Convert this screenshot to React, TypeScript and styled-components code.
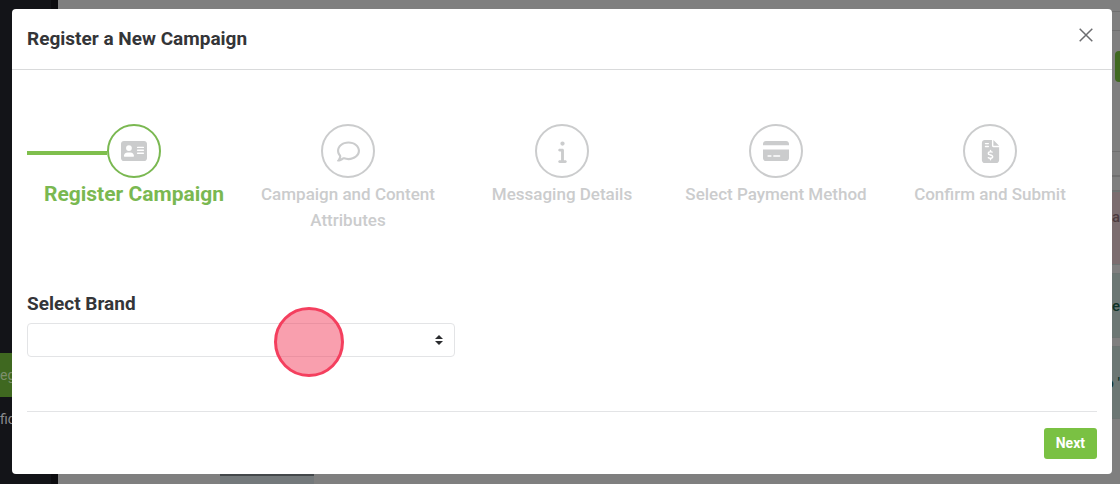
import React from "react";
import styled, { createGlobalStyle } from "styled-components";
import {
  FaAddressCard,
  FaRegComment,
  FaInfo,
  FaCreditCard,
  FaFileInvoiceDollar,
} from "react-icons/fa6";

const Global = createGlobalStyle`
  *, *::before, *::after { box-sizing: border-box; }
  body {
    margin: 0;
    font-family: Roboto, "Liberation Sans", sans-serif;
    color: #343538;
    background: #7f7f7f;
  }
  h1, p, ol { margin: 0; padding: 0; }
`;

const Screen = styled.div`
  position: relative;
  min-height: 100vh;
  overflow: hidden;
  padding: 9px 8px 10px 12px;
`;

const Backdrop = styled.div`
  position: absolute;
  inset: 0;
  display: flex;
  overflow: hidden;
  background: #7f7f7f;
`;

const Sidebar = styled.div`
  flex: none;
  width: 58px;
  padding-top: 353px;
  background: #131418;
  border-right: 7px solid #0c0c0f;
`;

const SideItem = styled.div<{ $active?: boolean }>`
  height: 44px;
  line-height: 44px;
  font-size: 14px;
  color: ${(p) => (p.$active ? "#7d8f6c" : "#8b8c8f")};
  background: ${(p) => (p.$active ? "#3f6820" : "transparent")};
`;

const Content = styled.div`
  flex: 1;
  display: flex;
  align-items: flex-end;
  justify-content: space-between;
  padding-left: 162px;
`;

const BottomTab = styled.div`
  width: 94px;
  height: 10px;
  border-top: 2px solid #44484b;
  background: #74797b;
`;

const SideCards = styled.div`
  align-self: stretch;
  width: 16px;
  display: flex;
  flex-direction: column;
  padding-top: 11px;

  > * {
    flex: none;
  }
`;

const Panel = styled.div<{ $height: number }>`
  height: ${(p) => p.$height}px;
  border: solid #6f6f6f;
  border-width: 1px 0;
`;

const GreenEdge = styled.div`
  height: 31px;
  margin: 20px 0 69px 11px;
  border-radius: 4px 0 0 4px;
  background: #3f6820;
`;

const Card = styled.div<{ $bg: string; $ink: string; $height: number; $top?: boolean }>`
  height: ${(p) => p.$height}px;
  margin-bottom: 8px;
  padding: ${(p) => (p.$top ? "16px 0" : "0")};
  display: flex;
  align-items: ${(p) => (p.$top ? "flex-start" : "center")};
  justify-content: flex-end;
  border: solid #6c7472;
  border-width: 1px 0;
  font-size: 15px;
  font-weight: 500;
  color: ${(p) => p.$ink};
  background: ${(p) => p.$bg};
`;

const Modal = styled.section`
  position: relative;
  border-radius: 4px;
  background: #fff;
`;

const Header = styled.header`
  display: flex;
  align-items: center;
  justify-content: space-between;
  height: 61px;
  padding: 0 15px;
  border-bottom: 1px solid #d9dadb;
`;

const Title = styled.h1`
  font-size: 19px;
  line-height: 26px;
  font-weight: 700;
`;

const CloseButton = styled.button`
  display: flex;
  margin-bottom: 8px;
  padding: 4px;
  border: 0;
  background: none;
  color: #6c6d70;
`;

const Body = styled.div`
  padding: 54px 15px 0;
`;

const Steps = styled.ol`
  display: grid;
  grid-template-columns: repeat(5, 1fr);
  min-height: 167px;
  list-style: none;
`;

const Step = styled.li<{ $active?: boolean }>`
  display: flex;
  flex-direction: column;
  align-items: center;
  text-align: center;
  font-size: ${(p) => (p.$active ? 21 : 17)}px;
  line-height: 26px;
  font-weight: ${(p) => (p.$active ? 700 : 500)};
  color: ${(p) => (p.$active ? "#7ab851" : "#cbcccd")};
`;

const Track = styled.div`
  align-self: stretch;
  display: grid;
  grid-template-columns: 1fr 54px 1fr;
  align-items: center;
  margin-bottom: 3px;
`;

const Line = styled.span<{ $active?: boolean }>`
  height: 4px;
  margin-top: 3px;
  background: ${(p) => (p.$active ? "#7fbf4d" : "transparent")};
`;

const Circle = styled.span<{ $active?: boolean }>`
  display: flex;
  align-items: center;
  justify-content: center;
  height: 54px;
  border: 2px solid ${(p) => (p.$active ? "#7ab851" : "#cbcccd")};
  border-radius: 50%;
  font-size: 23px;
  color: #cbcccd;
`;

const StepLabel = styled.span`
  max-width: 194px;
`;

const Field = styled.div`
  display: flex;
  flex-direction: column;
  width: 40%;
`;

const Label = styled.label`
  margin-bottom: 6px;
  font-size: 19px;
  line-height: 26px;
  font-weight: 700;
`;

const SelectWrap = styled.div`
  position: relative;
`;

const Select = styled.select`
  appearance: none;
  display: block;
  width: 100%;
  height: 34px;
  padding: 0 28px 0 12px;
  border: 1px solid #e3e4e6;
  border-radius: 4px;
  background: #fff;
  font: inherit;
`;

const SelectArrows = styled.svg`
  position: absolute;
  right: 12px;
  top: 12px;
  pointer-events: none;
`;

const ClickMarker = styled.span`
  position: absolute;
  left: 247px;
  top: -16px;
  width: 70px;
  height: 70px;
  border: 3px solid #f43f5e;
  border-radius: 50%;
  background: rgba(244, 63, 94, 0.5);
  pointer-events: none;
`;

const Footer = styled.footer`
  display: flex;
  justify-content: flex-end;
  margin-top: 54px;
  padding: 16px 0 15px;
  border-top: 1px solid #e3e4e6;
`;

const NextButton = styled.button`
  height: 31px;
  padding: 0 12px;
  border: 0;
  border-radius: 3px;
  background: #7ac143;
  color: #fff;
  font: 700 14px/31px Roboto, "Liberation Sans", sans-serif;
`;

const steps = [
  { label: "Register Campaign", icon: <FaAddressCard size={26} />, active: true },
  { label: "Campaign and Content Attributes", icon: <FaRegComment /> },
  { label: "Messaging Details", icon: <FaInfo /> },
  { label: "Select Payment Method", icon: <FaCreditCard size={26} /> },
  { label: "Confirm and Submit", icon: <FaFileInvoiceDollar /> },
];

export default function App() {
  return (
    <Screen>
      <Global />
      <Backdrop aria-hidden="true">
        <Sidebar>
          <SideItem $active>eg</SideItem>
          <SideItem>fic</SideItem>
        </Sidebar>
        <Content>
          <BottomTab />
          <SideCards>
            <Panel $height={20} />
            <GreenEdge />
            <Panel $height={25} />
            <Panel $height={15} />
            <Card $bg="#7b6d6f" $ink="#4d3c3f" $height={74} $top>a</Card>
            <Card $bg="#6c7774" $ink="#0f3327" $height={65}>e</Card>
            <Card $bg="#6c7774" $ink="#0f3327" $height={73}>o '</Card>
          </SideCards>
        </Content>
      </Backdrop>
      <Modal role="dialog" aria-labelledby="modal-title">
        <Header>
          <Title id="modal-title">Register a New Campaign</Title>
          <CloseButton type="button" aria-label="Close">
            <svg width="14" height="14" viewBox="0 0 14 14">
              <path d="M.7.7l12.6 12.6M13.3.7L.7 13.3" stroke="currentColor" strokeWidth="1.5" />
            </svg>
          </CloseButton>
        </Header>
        <Body>
          <Steps>
            {steps.map((s) => (
              <Step key={s.label} $active={s.active}>
                <Track>
                  <Line $active={s.active} />
                  <Circle $active={s.active}>{s.icon}</Circle>
                  <Line />
                </Track>
                <StepLabel>{s.label}</StepLabel>
              </Step>
            ))}
          </Steps>
          <Field>
            <Label htmlFor="brand">Select Brand</Label>
            <SelectWrap>
              <Select id="brand" defaultValue="">
                <option value=""></option>
              </Select>
              <SelectArrows width="8" height="10" viewBox="0 0 8 10">
                <path d="M4 0l4 4H0zM0 6h8l-4 4z" fill="#2b2c2f" />
              </SelectArrows>
              <ClickMarker />
            </SelectWrap>
          </Field>
          <Footer>
            <NextButton type="button">Next</NextButton>
          </Footer>
        </Body>
      </Modal>
    </Screen>
  );
}
